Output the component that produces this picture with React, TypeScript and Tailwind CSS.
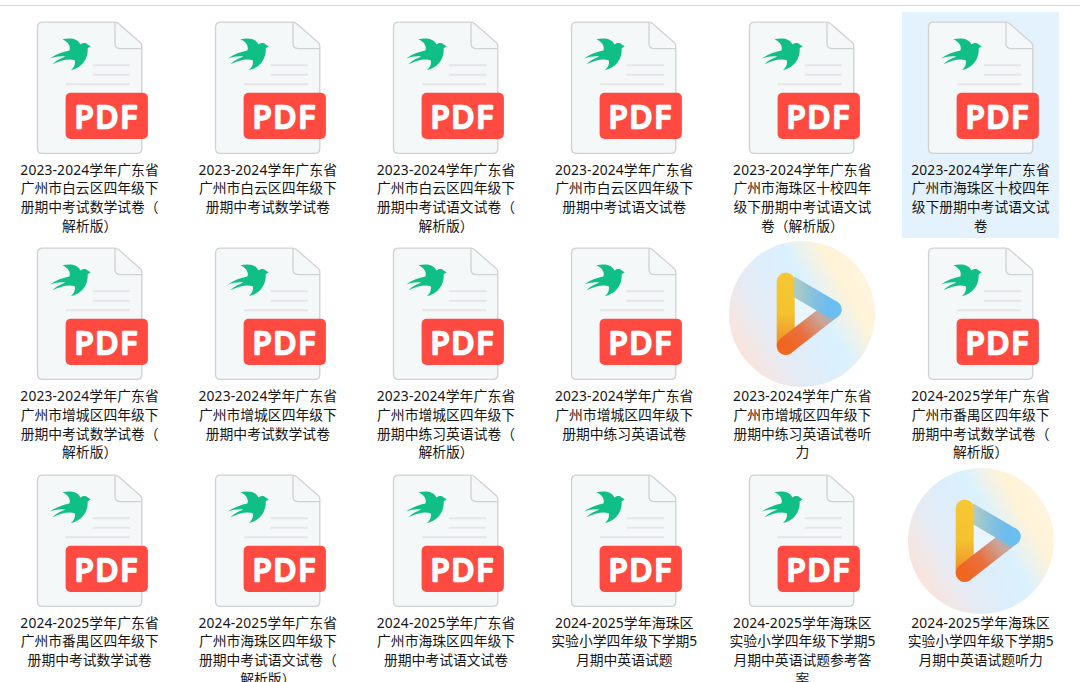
type FileItem = {
  kind: 'pdf' | 'audio'
  lines: string[]
  selected?: boolean
}

const files: FileItem[] = [
  { kind: 'pdf', lines: ['2023-2024学年广东省', '广州市白云区四年级下', '册期中考试数学试卷（', '解析版）'] },
  { kind: 'pdf', lines: ['2023-2024学年广东省', '广州市白云区四年级下', '册期中考试数学试卷'] },
  { kind: 'pdf', lines: ['2023-2024学年广东省', '广州市白云区四年级下', '册期中考试语文试卷（', '解析版）'] },
  { kind: 'pdf', lines: ['2023-2024学年广东省', '广州市白云区四年级下', '册期中考试语文试卷'] },
  { kind: 'pdf', lines: ['2023-2024学年广东省', '广州市海珠区十校四年', '级下册期中考试语文试', '卷（解析版）'] },
  { kind: 'pdf', selected: true, lines: ['2023-2024学年广东省', '广州市海珠区十校四年', '级下册期中考试语文试', '卷'] },
  { kind: 'pdf', lines: ['2023-2024学年广东省', '广州市增城区四年级下', '册期中考试数学试卷（', '解析版）'] },
  { kind: 'pdf', lines: ['2023-2024学年广东省', '广州市增城区四年级下', '册期中考试数学试卷'] },
  { kind: 'pdf', lines: ['2023-2024学年广东省', '广州市增城区四年级下', '册期中练习英语试卷（', '解析版）'] },
  { kind: 'pdf', lines: ['2023-2024学年广东省', '广州市增城区四年级下', '册期中练习英语试卷'] },
  { kind: 'audio', lines: ['2023-2024学年广东省', '广州市增城区四年级下', '册期中练习英语试卷听', '力'] },
  { kind: 'pdf', lines: ['2024-2025学年广东省', '广州市番禺区四年级下', '册期中考试数学试卷（', '解析版）'] },
  { kind: 'pdf', lines: ['2024-2025学年广东省', '广州市番禺区四年级下', '册期中考试数学试卷'] },
  { kind: 'pdf', lines: ['2024-2025学年广东省', '广州市海珠区四年级下', '册期中考试语文试卷（', '解析版）'] },
  { kind: 'pdf', lines: ['2024-2025学年广东省', '广州市海珠区四年级下', '册期中考试语文试卷'] },
  { kind: 'pdf', lines: ['2024-2025学年海珠区', '实验小学四年级下学期5', '月期中英语试题'] },
  { kind: 'pdf', lines: ['2024-2025学年海珠区', '实验小学四年级下学期5', '月期中英语试题参考答', '案'] },
  { kind: 'audio', lines: ['2024-2025学年海珠区', '实验小学四年级下学期5', '月期中英语试题听力'] },
]

function PdfIcon() {
  return (
    <svg viewBox="0 0 146 146" className="block size-[146px] shrink-0">
      {/* Sheet with folded corner */}
      <path
        d="M25.7 7.2H97.7Q99.8 7.2 101.4 8.6L123.2 27.4Q124.8 28.8 124.8 31V133.2Q124.8 138.4 119.6 138.4H25.7Q20.5 138.4 20.5 133.2V12.4Q20.5 7.2 25.7 7.2Z"
        fill="#f5f8f9"
        stroke="#d0d1d2"
        strokeWidth="1.3"
      />
      <path
        d="M98 7.4V28.6Q98 33.6 103 33.6H124.6"
        fill="none"
        stroke="#d0d1d2"
        strokeWidth="1.3"
      />
      <g stroke="#e4e6e8" strokeWidth="2">
        <path d="M75.7 50.2H113" />
        <path d="M75.7 59.8H113" />
        <path d="M49 69.2H113" />
      </g>
      {/* Swallow */}
      <path
        transform="translate(13.7 .5) scale(.3333)"
        d="M95 71C118 66 142 68 149 87C155 82 164 80 171 87L180 92L171 98C173 129 154 157 120 164C130 156 135 145 132 134C112 129 91 135 65 146C78 134 90 129 104 123C88 121 75 124 58 129C77 116 96 109 116 105C121 92 112 78 95 71Z"
        fill="#0fbf86"
      />
      <rect x="48.6" y="77.8" width="82.3" height="46.2" rx="5" fill="#ff4a42" />
      <text
        x="57.7 78.4 103.4"
        y="112.9"
        fill="#fff"
        stroke="#fff"
        strokeWidth="2.6"
        strokeLinejoin="round"
        className="font-['Noto_Sans','Open_Sans',sans-serif] text-[31px] font-normal"
      >
        PDF
      </text>
    </svg>
  )
}

function AudioIcon() {
  return (
    <svg viewBox="0 0 146 146" className="block size-[146px] shrink-0">
      <defs>
        <linearGradient id="disc" gradientUnits="userSpaceOnUse" x1="9.5" y1="109.5" x2="136.5" y2="36.5">
          <stop offset="0" stopColor="#fae4dd" />
          <stop offset=".25" stopColor="#e5ebf4" />
          <stop offset=".45" stopColor="#ddeefb" />
          <stop offset=".62" stopColor="#daf1fe" />
          <stop offset=".72" stopColor="#ebf2ee" />
          <stop offset=".84" stopColor="#fff3d8" />
          <stop offset="1" stopColor="#fff5de" />
        </linearGradient>
        <linearGradient id="yellowBar" gradientUnits="userSpaceOnUse" x1="56" y1="31" x2="56" y2="114">
          <stop offset="0" stopColor="#f7c733" />
          <stop offset=".5" stopColor="#f4c230" />
          <stop offset=".75" stopColor="#f0a02c" />
          <stop offset="1" stopColor="#ee7a25" />
        </linearGradient>
        {/* hard stop on the left keeps the yellow bar's edge clean */}
        <linearGradient id="blueBar" gradientUnits="userSpaceOnUse" x1="64.6" y1="0" x2="112.7" y2="0">
          <stop offset="0" stopColor="#b3cdbf" stopOpacity="0" />
          <stop offset="0" stopColor="#b3cdbf" />
          <stop offset=".4" stopColor="#87c0de" />
          <stop offset=".7" stopColor="#6bbdee" />
          <stop offset="1" stopColor="#6bc0f2" />
        </linearGradient>
        <linearGradient id="orangeBar" gradientUnits="userSpaceOnUse" x1="57" y1="105" x2="104" y2="67">
          <stop offset="0" stopColor="#f0651f" />
          <stop offset=".35" stopColor="#e87040" />
          <stop offset=".72" stopColor="#cba598" />
          <stop offset="1" stopColor="#8fb5cf" />
        </linearGradient>
      </defs>
      <circle cx="73" cy="73" r="73" fill="url(#disc)" />
      <path d="M62 52V90L92 69Z" fill="#eaf6fd" />
      <g fill="none" strokeWidth="18" strokeLinecap="round">
        <path d="M56.7 40.6V104.8" stroke="url(#yellowBar)" />
        <path d="M56.7 104.8L103.6 68.4" stroke="url(#orangeBar)" />
        <path d="M56.7 41L103.6 68.4" stroke="url(#blueBar)" />
      </g>
    </svg>
  )
}

function FileTile({ file }: { file: FileItem }) {
  return (
    <div
      className={`flex h-[226px] w-[157px] flex-col items-center pt-[2.5px] ${
        file.selected ? 'bg-[#e4f2fd]' : ''
      }`}
    >
      {file.kind === 'pdf' ? <PdfIcon /> : <AudioIcon />}
      <div className="text-center text-[13.8px] leading-[18.8px] whitespace-nowrap text-[#151515]">
        {file.lines.map((line) => (
          <div key={line} className="first:tracking-[0.15px]">
            {line}
          </div>
        ))}
      </div>
    </div>
  )
}

export default function App() {
  return (
    <div className="h-[682px] w-[1080px] overflow-hidden bg-white font-['Noto_Sans','Noto_Sans_CJK_SC',sans-serif]">
      <div className="h-1.5 border-b border-[#d6d6d6]" />
      <main className="grid auto-rows-[226.5px] grid-cols-[repeat(6,178.2px)] justify-items-center pt-1.5 pl-[0.6px]">
        {files.map((file) => (
          <FileTile key={file.lines.join('')} file={file} />
        ))}
      </main>
    </div>
  )
}
